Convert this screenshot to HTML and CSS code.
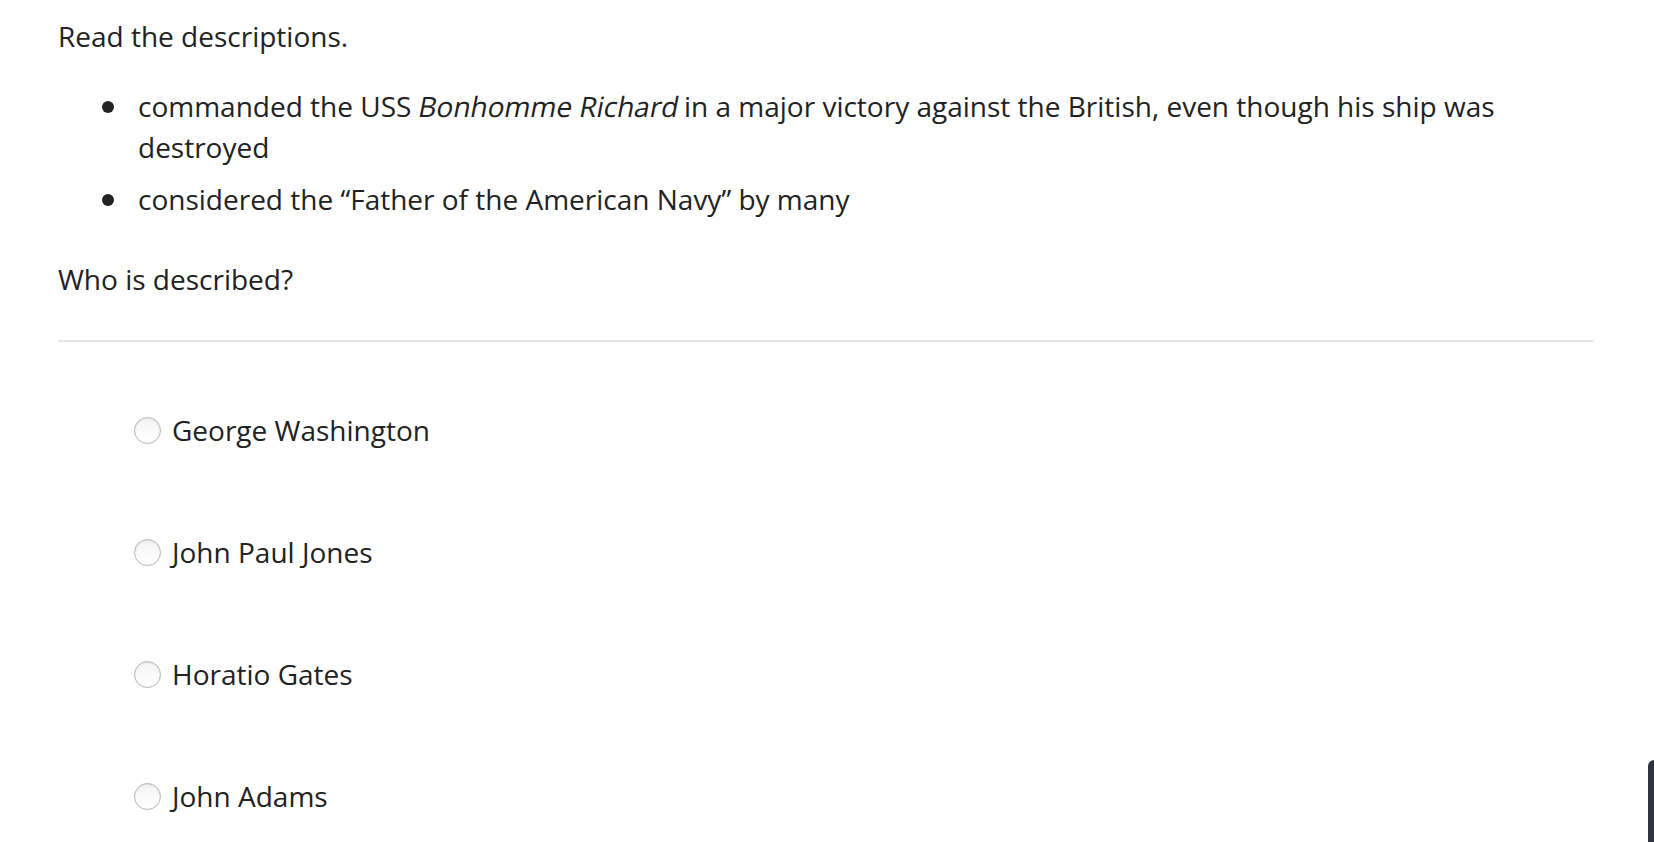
FILE: index.html
```html
<!DOCTYPE html>
<html>
<head>
<meta charset="utf-8">
<link rel="stylesheet" href="styles.css">
</head>
<body>
<main class="question">
  <p class="prompt">Read the descriptions.</p>
  <ul class="clues">
    <li>commanded the USS <em class="ship">Bonhomme Richard</em> in a major victory against the British, even though his ship was destroyed</li>
    <li>considered the “Father of the American Navy” by many</li>
  </ul>
  <p class="prompt ask">Who is described?</p>
  <hr class="divider">
  <div class="choices">
    <label class="choice"><span class="radio"></span><span>George Washington</span></label>
    <label class="choice"><span class="radio"></span><span>John Paul Jones</span></label>
    <label class="choice"><span class="radio"></span><span>Horatio Gates</span></label>
    <label class="choice"><span class="radio"></span><span>John Adams</span></label>
  </div>
</main>
<div class="side-tab"></div>
</body>
</html>
```
FILE: styles.css
```css
html, body {
  margin: 0;
  padding: 0;
  background: #fff;
}
body {
  font-family: "Open Sans", "Liberation Sans", sans-serif;
  font-size: 28px;
  color: #222;
  overflow: hidden;
}
.question {
  padding: 16px 60px 0 58px;
}
.prompt {
  margin: 0;
  line-height: 41px;
}
.clues {
  margin: 29px 0 0 0;
  padding: 0 0 0 80px;
  list-style: none;
}
.clues li {
  position: relative;
  line-height: 41px;
  margin-bottom: 11px;
}
.clues li::before {
  content: "";
  position: absolute;
  left: -36px;
  top: 15px;
  width: 12px;
  height: 12px;
  border-radius: 50%;
  background: #222;
}
.ship {
  font-style: normal;
  display: inline-block;
  transform: skewX(-11deg);
  margin-right: -2px;
}
.ask {
  margin-top: 39px;
}
.divider {
  border: 0;
  border-top: 2px solid #e6e6e6;
  margin: 40px 0 0 0;
}
.choices {
  display: flex;
  flex-direction: column;
  gap: 81px;
  padding: 68px 0 0 76px;
}
.choice {
  display: flex;
  align-items: center;
  gap: 11px;
  line-height: 41px;
}
.radio {
  width: 25px;
  height: 25px;
  border-radius: 50%;
  border: 1px solid #b5b5b5;
  background: linear-gradient(#f4f4f4, #ffffff);
  box-shadow: inset 0 1px 2px rgba(0,0,0,0.08);
  flex: none;
}
.side-tab {
  position: fixed;
  right: 0;
  bottom: 0;
  width: 6px;
  height: 82px;
  background: #2e343e;
  border-top-left-radius: 6px;
}
```
